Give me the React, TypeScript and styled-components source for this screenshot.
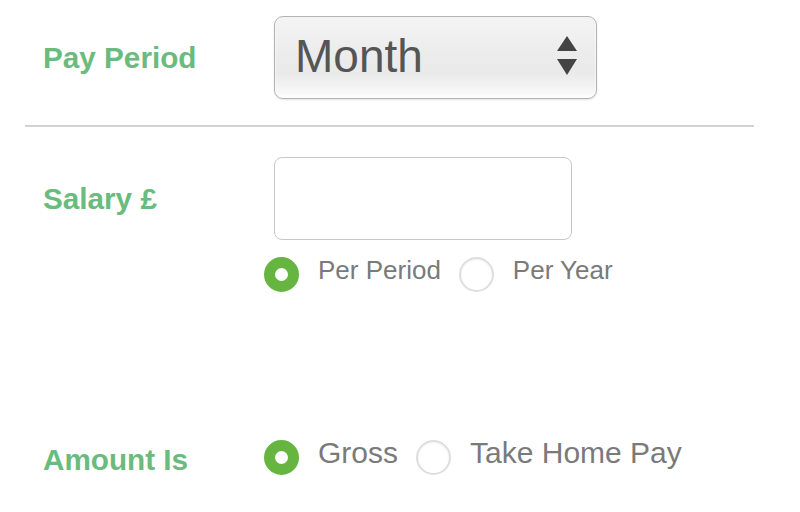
import React, { useState } from 'react'
import styled, { createGlobalStyle } from 'styled-components'

const GlobalStyle = createGlobalStyle`
  html, body {
    margin: 0;
    padding: 0;
    background: #ffffff;
    font-family: 'Liberation Sans', Arial, sans-serif;
  }
`

const StyledForm = styled.form`
  width: 800px;
  padding-top: 16px;
  box-sizing: border-box;
`

const StyledRow = styled.div<{ $top?: number }>`
  display: grid;
  grid-template-columns: 231px 1fr;
  align-items: start;
  padding-left: 43px;
  margin-top: ${(props) => props.$top ?? 0}px;
`

const StyledLabel = styled.label<{ $line: number }>`
  font-size: 29.7px;
  font-weight: bold;
  color: #6abb7d;
  line-height: ${(props) => props.$line}px;
  white-space: nowrap;
`

const StyledDivider = styled.hr`
  border: none;
  height: 2px;
  background: #d2d2d2;
  margin: 26px 46px 0 25px;
`

const StyledSelectWrap = styled.div`
  position: relative;
  width: 323px;
  height: 83px;
`

const StyledSelect = styled.select`
  appearance: none;
  -webkit-appearance: none;
  width: 100%;
  height: 100%;
  box-sizing: border-box;
  border: 1px solid #b4b4b4;
  border-radius: 9px;
  padding: 0 0 4px 20px;
  font-family: 'Liberation Sans', Arial, sans-serif;
  font-size: 46px;
  color: #555555;
  background: linear-gradient(#f4f4f4 0%, #ececec 45%, #eaeaea 70%, #fbfbfb 100%);
  box-shadow: inset 0 -2px 3px rgba(255, 255, 255, 0.9), 0 1px 2px rgba(0, 0, 0, 0.12);
  outline: none;
`

const StyledArrows = styled.svg`
  position: absolute;
  right: 19px;
  top: 19px;
  pointer-events: none;
`

const StyledInput = styled.input`
  display: block;
  width: 298px;
  height: 83px;
  box-sizing: border-box;
  border: 1.5px solid #c9c9c9;
  border-radius: 8px;
  font-size: 28px;
  padding: 0 14px;
  outline: none;
`

const StyledRadioGroup = styled.div<{ $top?: number }>`
  display: flex;
  align-items: center;
  height: 42px;
  margin: ${(props) => props.$top ?? 0}px 0 0 -10px;
`

const StyledRadio = styled.input`
  appearance: none;
  -webkit-appearance: none;
  width: 35px;
  height: 35px;
  margin: 8px 0 0 0;
  box-sizing: border-box;
  border-radius: 50%;
  border: 2px solid #dedede;
  background: #ffffff;
  box-shadow: inset 0 1px 2px rgba(0, 0, 0, 0.06);
  flex-shrink: 0;

  &:checked {
    border: 11px solid #66b540;
    box-shadow: none;
  }
`

const StyledOption = styled.span<{ $size: number }>`
  font-size: ${(props) => props.$size}px;
  color: #7a7a7a;
  line-height: 30px;
  margin: 0 18px 0 19px;
  white-space: nowrap;
`

const RadioPair = ({
  name,
  options,
  size,
  top,
}: {
  name: string
  options: string[]
  size: number
  top?: number
}) => {
  const [value, setValue] = useState(options[0])
  return (
    <StyledRadioGroup $top={top}>
      {options.map((opt) => (
        <React.Fragment key={opt}>
          <StyledRadio
            type="radio"
            name={name}
            checked={value === opt}
            onChange={() => setValue(opt)}
          />
          <StyledOption $size={size}>{opt}</StyledOption>
        </React.Fragment>
      ))}
    </StyledRadioGroup>
  )
}

export default function App() {
  return (
    <>
      <GlobalStyle />
      <StyledForm>
        <StyledRow>
          <StyledLabel $line={83}>Pay Period</StyledLabel>
          <StyledSelectWrap>
            <StyledSelect defaultValue="Month">
              <option>Week</option>
              <option>Month</option>
              <option>Year</option>
            </StyledSelect>
            <StyledArrows width="22" height="42" viewBox="0 0 22 42">
              <path d="M11 1 L21 16 L1 16 Z" fill="#444" />
              <path d="M1 24 L21 24 L11 40 Z" fill="#444" />
            </StyledArrows>
          </StyledSelectWrap>
        </StyledRow>

        <StyledDivider />

        <StyledRow $top={30}>
          <StyledLabel $line={83}>Salary £</StyledLabel>
          <div>
            <StyledInput type="text" />
            <RadioPair name="per" options={['Per Period', 'Per Year']} size={26} top={9} />
          </div>
        </StyledRow>

        <StyledRow $top={141}>
          <StyledLabel $line={56}>Amount Is</StyledLabel>
          <RadioPair name="amount" options={['Gross', 'Take Home Pay']} size={30} />
        </StyledRow>
      </StyledForm>
    </>
  )
}
